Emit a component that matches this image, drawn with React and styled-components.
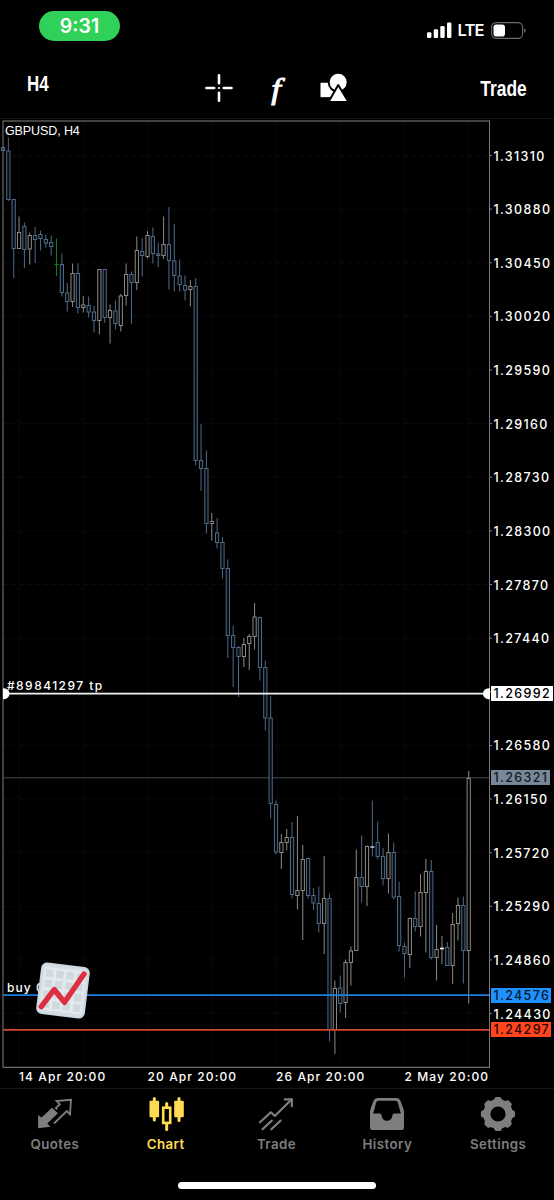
import React from "react";
import styled, { createGlobalStyle } from "styled-components";

const GlobalStyle = createGlobalStyle`
  * {
    box-sizing: border-box;
  }
  body {
    margin: 0;
    background: #000;
    font-family: Inter, "Liberation Sans", sans-serif;
  }
`;

const Screen = styled.div`
  width: 554px;
  height: 1200px;
  display: flex;
  flex-direction: column;
  background: #000;
  color: #fff;
  overflow: hidden;
`;

const StatusBar = styled.div`
  height: 52px;
  padding: 11px 28px 0 39px;
  display: flex;
  justify-content: space-between;
  align-items: flex-start;
`;

const TimePill = styled.div`
  width: 81px;
  height: 30px;
  border-radius: 15px;
  background: #30d158;
  font-size: 19.5px;
  font-weight: 600;
  line-height: 30px;
  text-align: center;
`;

const StatusIcons = styled.div`
  display: flex;
  align-items: center;
  height: 17px;
  margin-top: 11px;
`;

const Network = styled.span`
  font-size: 16.5px;
  font-weight: 600;
  letter-spacing: -0.8px;
  line-height: 17px;
  margin: 0 7.5px 0 5.5px;
  width: 26px;
`;

const Toolbar = styled.div`
  height: 67px;
  padding: 0 27px;
  display: grid;
  grid-template-columns: 1fr auto 1fr;
  border-bottom: 1px solid #161616;
`;

const BarButton = styled.button`
  border: none;
  background: none;
  padding: 0;
  color: #fff;
  font-family: "Liberation Sans", Arial, sans-serif;
  font-size: 22px;
  font-weight: 700;
  line-height: 24px;
  justify-self: ${(p) => (p.$right ? "end" : "start")};
  align-self: start;
  margin-top: ${(p) => (p.$right ? "25px" : "20px")};
  transform: scaleX(${(p) => (p.$right ? 0.79 : 0.77)});
  transform-origin: ${(p) => (p.$right ? "right" : "left")} center;
`;

const Tools = styled.div`
  display: flex;
  align-items: center;
  height: 30px;
  margin-top: 21px;
  padding-right: 1px;
`;

const FunctionSign = styled.span`
  width: 30px;
  margin: 0 29px 0 28px;
  font-family: "Liberation Serif", serif;
  font-style: italic;
  font-size: 30px;
  line-height: 29px;
  text-align: center;
  transform: scaleX(1.15);
  -webkit-text-stroke: 0.9px #fff;
`;

const ChartArea = styled.div`
  height: 969px;
  display: grid;
  grid-template-columns: 490px 1fr;
  grid-template-rows: 949px 20px;
  font-size: 12.5px;
  font-weight: 500;
  letter-spacing: 1.35px;
`;

const Plot = styled.div`
  position: relative;
`;

const PlotSvg = styled.svg`
  display: block;
`;

const PlotLabel = styled.span`
  position: absolute;
  left: 7px;
  top: ${(p) => p.$top}px;
  line-height: 14px;
  font-size: 12px;
  letter-spacing: ${(p) => p.$spacing}px;
  white-space: nowrap;
`;

const Symbol = styled.span`
  position: absolute;
  left: 5px;
  top: 5px;
  font-family: "Liberation Sans", Arial, sans-serif;
  font-size: 12.5px;
  font-weight: 400;
  letter-spacing: -0.1px;
  line-height: 15px;
`;

const Sticker = styled.svg`
  position: absolute;
  left: 34px;
  top: 841px;
`;

const PriceScale = styled.div`
  position: relative;
  padding: 10.5px 0 0 3.5px;
`;

// short marks between the frame and the price labels
const PriceTicks = styled.svg`
  position: absolute;
  left: 0;
  top: 0;
`;

const Price = styled.div`
  height: 53.63px;
  line-height: 53.63px;
`;

const PriceTag = styled.div`
  position: absolute;
  left: 1px;
  top: ${(p) => p.$top}px;
  width: ${(p) => p.$width}px;
  height: 15px;
  line-height: 15px;
  padding-left: 2.5px;
  background: ${(p) => p.$bg};
  color: ${(p) => p.$color};
`;

const TimeScale = styled.div`
  grid-column: 1 / -1;
  padding-left: 19px;
  display: flex;
`;

const TimeLabel = styled.span`
  width: 128.5px;
  line-height: 17px;
  font-size: 12px;
  letter-spacing: 1.1px;
  white-space: nowrap;
`;

const TabBar = styled.nav`
  height: 94px;
  border-top: 1px solid #161616;
  display: flex;
`;

const Tab = styled.div`
  flex: 1;
  display: flex;
  flex-direction: column;
  align-items: center;
  padding: 7px 1px 0 0;
  color: ${(p) => (p.$active ? "#ffdc52" : "#7e7e7f")};
`;

const TabLabel = styled.span`
  margin-top: 4px;
  font-size: 13.3px;
  font-weight: 600;
  line-height: 17px;
  letter-spacing: 0.45px;
`;

const HomeIndicator = styled.div`
  width: 198px;
  height: 7px;
  border-radius: 4px;
  background: #fff;
  margin: 0 auto;
`;

const DOWN = "#4f6a88";
const UP = "#8d8a84";

// [high, low, body top, body bottom, direction]
const candles = [
  [147, 151, 147.5, 150.5, "d"],
  [137.5, 201, 151, 199.5, "d"],
  [199, 278, 199.5, 248.5, "d"],
  [216.5, 248.5, 232.5, 248.5, "u"],
  [222.5, 268, 226.5, 249.5, "d"],
  [232.5, 264.5, 235.5, 249, "u"],
  [227, 263, 235.5, 239.5, "d"],
  [230.5, 250.5, 234.5, 238.5, "d"],
  [234.5, 247.5, 239.5, 243, "d"],
  [235.5, 255.5, 242.5, 246.5, "d"],
  [238.5, 276, 264.5, 264.5, "g"],
  [253.5, 296.5, 264.5, 292.5, "d"],
  [283, 311.5, 293, 301.5, "d"],
  [263.5, 307, 273.5, 301.5, "u"],
  [263.5, 313.5, 273.5, 307.5, "d"],
  [296, 312.5, 305, 307.5, "u"],
  [296.5, 317.5, 305.5, 312, "d"],
  [306, 332.5, 312, 320.5, "d"],
  [269, 334.5, 269.5, 320.5, "u"],
  [269, 323, 269.5, 317.5, "d"],
  [304.5, 343.5, 310.5, 317.5, "u"],
  [300.5, 329.5, 311, 323.5, "d"],
  [294, 331.5, 296, 325.5, "u"],
  [263.5, 305.5, 274.5, 295.5, "u"],
  [271.5, 324, 274.5, 282.5, "d"],
  [236.5, 290, 250.5, 282.5, "u"],
  [238, 276.5, 251.5, 255.5, "d"],
  [231, 258.5, 235.5, 256.5, "u"],
  [227.5, 263.5, 236.5, 253.5, "d"],
  [242.5, 267, 254, 255.5, "d"],
  [216.5, 259, 244.5, 255.5, "u"],
  [207, 289.5, 244.5, 260.5, "d"],
  [224, 291.5, 261, 275.5, "d"],
  [259.5, 291.5, 276, 284.5, "d"],
  [275.5, 300.5, 285.5, 290, "d"],
  [280, 306.5, 286.5, 289.5, "u"],
  [278, 465.5, 286.5, 460.5, "d"],
  [424, 491, 460.5, 468.5, "d"],
  [450.5, 533.5, 468.5, 523.5, "d"],
  [513, 540.5, 521.5, 523.5, "u"],
  [518, 548.5, 533, 542.5, "d"],
  [537, 578.5, 542.5, 568.5, "d"],
  [559.5, 658, 568.5, 635.5, "d"],
  [625.5, 687, 635.5, 647.5, "d"],
  [646, 697, 647.5, 656.5, "d"],
  [638, 667, 644.5, 656.5, "u"],
  [634, 670, 636.5, 643.5, "u"],
  [603, 649.5, 617, 636.5, "u"],
  [616.5, 680.5, 617.5, 667.5, "d"],
  [660.5, 730.5, 667.5, 718, "d"],
  [696, 818.5, 718, 803.5, "d"],
  [800.5, 854.5, 804.5, 852, "d"],
  [834, 869, 842.5, 852.5, "u"],
  [829, 850.5, 837.5, 842.5, "u"],
  [822, 898.5, 837.5, 894.5, "d"],
  [816, 909.5, 890.5, 895.5, "u"],
  [845, 940, 859.5, 890.5, "u"],
  [857.5, 898.5, 858.5, 895.5, "d"],
  [888, 910, 895.5, 903, "d"],
  [886.5, 932.5, 903.5, 923.5, "d"],
  [856, 954, 898.5, 923.5, "u"],
  [893.5, 1041.5, 898.5, 1029.5, "d"],
  [980.5, 1054, 988.5, 1029.5, "u"],
  [975.5, 1012.5, 988, 1003.5, "d"],
  [959.5, 1018, 962.5, 1002.5, "u"],
  [946.5, 985.5, 951, 962.5, "u"],
  [849.5, 951, 877.5, 950.5, "u"],
  [835.5, 902.5, 877.5, 886.5, "d"],
  [845.5, 906, 846.5, 886.5, "u"],
  [800.5, 856.5, 847, 847, "dd"],
  [821.5, 859.5, 842.5, 856.5, "d"],
  [848, 885.5, 856.5, 878.5, "d"],
  [833.5, 893.5, 852.5, 878.5, "u"],
  [842.5, 899.5, 852.5, 897, "d"],
  [881.5, 951.5, 896.5, 945.5, "d"],
  [942.5, 977.5, 946.5, 953.5, "d"],
  [917.5, 968, 918.5, 954.5, "u"],
  [891.5, 931.5, 918.5, 926.5, "d"],
  [874, 936.5, 892.5, 926.5, "u"],
  [859, 952.5, 871.5, 892.5, "u"],
  [860, 959.5, 871.5, 957.5, "d"],
  [925, 980.5, 949.5, 957.5, "u"],
  [936, 964, 948.5, 948.5, "du"],
  [942, 965.5, 947.5, 965.5, "d"],
  [913, 984, 924.5, 965.5, "u"],
  [897.5, 940.5, 905.5, 923.5, "u"],
  [896.5, 983.5, 905.5, 950.5, "d"],
  [771, 1003.5, 778.5, 950.5, "u"],
];

const prices = [
  "1.31310",
  "1.30880",
  "1.30450",
  "1.30020",
  "1.29590",
  "1.29160",
  "1.28730",
  "1.28300",
  "1.27870",
  "1.27440",
  "",
  "1.26580",
  "1.26150",
  "1.25720",
  "1.25290",
  "1.24860",
  "1.24430",
];

const times = ["14 Apr 20:00", "20 Apr 20:00", "26 Apr 20:00", "2 May 20:00"];

const candleX = (i) => 3 + i * 5.353;
const gridY = (i) => 155.5 + i * 53.63;
const gridX = (i) => 19 + i * 64.24;

const Candle = ({ x, data }) => {
  const [high, low, top, bottom, kind] = data;
  if (kind === "g") {
    return (
      <path
        d={`M${x} ${high}V${low}M${x - 2} ${top}H${x + 2}`}
        stroke="#0c8a12"
      />
    );
  }
  if (kind.length === 2) {
    return (
      <>
        <path d={`M${x} ${high}V${low}`} stroke={kind === "dd" ? DOWN : UP} />
        <path
          d={`M${x - 2} ${top}H${x + 2}`}
          stroke={kind === "dd" ? "#b4cbe8" : "#fff"}
          strokeWidth="1.6"
        />
      </>
    );
  }
  const color = kind === "d" ? DOWN : UP;
  return (
    <g stroke={color}>
      <path d={`M${x} ${high}V${top}M${x} ${bottom}V${low}`} />
      <rect
        x={x - 1.6}
        y={top}
        width="3.2"
        height={bottom - top}
        fill={kind === "d" ? "#060b12" : "#000"}
      />
    </g>
  );
};

const PriceChart = () => (
  <PlotSvg width="490" height="949" viewBox="0 119 490 949" fill="none">
    <g stroke="#0b0c0d" strokeDasharray="5 3">
      {prices.map((p, i) => (
        <path key={i} d={`M3 ${gridY(i)}H489`} />
      ))}
      {[0, 1, 2, 3, 4, 5, 6, 7].map((i) => (
        <path key={i} d={`M${gridX(i)} 122V1067`} />
      ))}
    </g>
    <path d="M3 777.8H490" stroke="#454a50" />
    {candles.map((c, i) => (
      <Candle key={i} x={candleX(i)} data={c} />
    ))}
    <path d="M3 693.7H490" stroke="#f1f3f3" strokeWidth="1.8" />
    <path d="M3 995.1H490" stroke="#1a7fdf" strokeWidth="1.8" />
    <path d="M3 1029.8H490" stroke="#d8452f" strokeWidth="1.8" />
    <path d="M3 121V1067.5" stroke="#6a6a6a" strokeWidth="1.2" />
    <path d="M3 121H490M489.6 121V1067.5M3 1067.3H490" stroke="#858585" />
    <path d="M3 688.2h1a5.5 5.5 0 0 1 0 11H3z" fill="#fff" />
    <path d="M490 688.2h-1.5a5.5 5.5 0 0 0 0 11h1.5z" fill="#fff" />
  </PlotSvg>
);

const ChartSticker = () => (
  <Sticker width="58" height="60" viewBox="0 0 58 60">
    <g transform="rotate(7 29 30.4)">
      <rect x="4.5" y="4.5" width="49" height="52" rx="6" fill="#ccd6dd" />
      <rect x="6" y="6" width="46" height="49" rx="5" fill="#d4dee4" />
      <rect x="8" y="9" width="42" height="43" rx="1" fill="#e3eaee" />
      {[0, 1, 2, 3].map((r) =>
        [0, 1, 2, 3].map((c) => (
          <rect
            key={`${r}${c}`}
            x={9.8 + c * 10.4}
            y={11.3 + r * 10.4}
            width="7.4"
            height="7.4"
            fill="#cfd9de"
          />
        ))
      )}
    </g>
    <path
      d="M7.3 46.7L20.2 29.5L30.5 42.3L50 14"
      fill="none"
      stroke="#dd2e44"
      strokeWidth="5.4"
      strokeLinecap="round"
      strokeLinejoin="round"
    />
  </Sticker>
);

const SignalIcon = () => (
  <svg width="25" height="17" viewBox="0 0 25 17" fill="#fff">
    <rect x="0" y="10.3" width="4.4" height="5.7" rx="1.3" />
    <rect x="6.7" y="7.3" width="4.4" height="8.7" rx="1.3" />
    <rect x="13.3" y="4" width="4.4" height="12" rx="1.3" />
    <rect x="20" y="0.5" width="4.4" height="15.5" rx="1.3" />
  </svg>
);

const BatteryIcon = () => (
  <svg width="35" height="17" viewBox="0 0 35 17">
    <rect
      x="0.6"
      y="0.6"
      width="31"
      height="15.8"
      rx="4.6"
      fill="none"
      stroke="#6d6d6d"
      strokeWidth="1.1"
    />
    <rect x="2.5" y="2.4" width="11.5" height="12.2" rx="2.8" fill="#fff" />
    <path d="M33.2 6.2q1.6 .8 1.6 2.3t-1.6 2.3z" fill="#6d6d6d" />
  </svg>
);

const CrosshairIcon = () => (
  <svg width="28" height="30" viewBox="0 0 28 30">
    <path
      d="M1.5 15H9.2M18.8 15H26.5M14 2.3V10.2M14 19.8V27.7"
      stroke="#fff"
      strokeWidth="2.6"
      strokeLinecap="round"
    />
    <circle cx="14" cy="15" r="1.1" fill="#fff" />
  </svg>
);

const ObjectsIcon = () => (
  <svg width="28" height="30" viewBox="0 0 28 30" stroke="#000">
    <rect x="0" y="9.2" width="14" height="15.5" rx="1.5" fill="#fff" />
    <circle cx="18.2" cy="9.3" r="9.5" fill="#fff" strokeWidth="2" />
    <path
      d="M18.2 12L28.5 29H8.5Z"
      fill="#fff"
      strokeWidth="2"
      strokeLinejoin="round"
    />
  </svg>
);

const QuotesIcon = () => (
  <svg width="36" height="36" viewBox="0 0 36 36" fill="none">
    <path
      d="M1.1 19L4.5 21.5L14.9 11.7L20.9 17.3L10.3 27.5L13.5 30.7L1.1 32.3Z"
      fill="currentColor"
    />
    <path
      d="M20 13.5L18.8 12L22.9 8.2L19.5 5L34 3.8L33 18.3L29.8 15L17 27.5"
      stroke="currentColor"
      strokeWidth="1.8"
    />
  </svg>
);

const ChartIcon = () => (
  <svg width="36" height="36" viewBox="0 0 36 36">
    <g fill="currentColor">
      <rect x="1.5" y="4.8" width="9.6" height="16.5" rx="1" />
      <rect x="4.8" y="1" width="3" height="24.5" rx="1.5" />
      <rect x="26.2" y="4.8" width="9.6" height="16.5" rx="1" />
      <rect x="29.5" y="1" width="3" height="25" rx="1.5" />
      <rect x="17.2" y="6" width="3" height="6" rx="1.5" />
      <rect x="17.2" y="26" width="3" height="9" rx="1.5" />
    </g>
    <rect
      x="15.2"
      y="11.7"
      width="7"
      height="15.2"
      fill="none"
      stroke="currentColor"
      strokeWidth="2.6"
    />
  </svg>
);

const TradeIcon = () => (
  <svg
    width="36"
    height="36"
    viewBox="0 0 36 36"
    fill="none"
    stroke="currentColor"
    strokeWidth="2.2"
    strokeLinecap="round"
    strokeLinejoin="round"
  >
    <path d="M2 26.3L12.9 16.3L16.8 20L33.5 3.5" />
    <path d="M26.8 3.4H33.8V10.2" />
    <path d="M4.5 33.3L13.8 24.6M13.3 33.3L22.5 24.6" />
  </svg>
);

const HistoryIcon = () => (
  <svg width="36" height="36" viewBox="0 0 36 36">
    <path
      fillRule="evenodd"
      fill="currentColor"
      d="M8.5 2H27.5Q30.3 2 31.3 4.6L34.3 12.5Q35 14.5 35 16.5V31.5Q35 34 32.5 34H3.5Q1 34 1 31.5V16.5Q1 14.5 1.7 12.5L4.7 4.6Q5.7 2 8.5 2ZM9.2 4.7Q7.7 4.7 7.2 6.2L4.2 17.5H11Q12.3 17.5 12.5 19Q13.2 24.8 18 24.8T23.5 19Q23.7 17.5 25 17.5H31.8L28.8 6.2Q28.3 4.7 26.8 4.7Z"
    />
  </svg>
);

const SettingsIcon = () => (
  <svg width="36" height="36" viewBox="0 0 36 36">
    <circle
      cx="18"
      cy="18"
      r="11.2"
      fill="none"
      stroke="currentColor"
      strokeWidth="7.2"
    />
    {[0, 45, 90, 135, 180, 225, 270, 315].map((a) => (
      <path
        key={a}
        d="M12 5.2Q13.8 4.8 14.4 2.6Q15 .9 16.6 .9H19.4Q21 .9 21.6 2.6Q22.2 4.8 24 5.2Z"
        fill="currentColor"
        transform={`rotate(${a} 18 18)`}
      />
    ))}
  </svg>
);

const tabs = [
  { label: "Quotes", icon: <QuotesIcon /> },
  { label: "Chart", icon: <ChartIcon />, active: true },
  { label: "Trade", icon: <TradeIcon /> },
  { label: "History", icon: <HistoryIcon /> },
  { label: "Settings", icon: <SettingsIcon /> },
];

const App = () => {
  return (
    <Screen>
      <GlobalStyle />
      <StatusBar>
        <TimePill>9:31</TimePill>
        <StatusIcons>
          <SignalIcon />
          <Network>LTE</Network>
          <BatteryIcon />
        </StatusIcons>
      </StatusBar>
      <Toolbar>
        <BarButton>H4</BarButton>
        <Tools>
          <CrosshairIcon />
          <FunctionSign>f</FunctionSign>
          <ObjectsIcon />
        </Tools>
        <BarButton $right>Trade</BarButton>
      </Toolbar>
      <ChartArea>
        <Plot>
          <PriceChart />
          <Symbol>GBPUSD, H4</Symbol>
          <PlotLabel $top={560} $spacing={1.45}>
            #89841297 tp
          </PlotLabel>
          <PlotLabel $top={862} $spacing={1.05}>
            buy 0
          </PlotLabel>
          <ChartSticker />
        </Plot>
        <PriceScale>
          <PriceTicks width="3" height="949" viewBox="0 119 3 949">
            {prices.map((p, i) => (
              <path key={i} d={`M0 ${gridY(i)}H2`} stroke="#858585" />
            ))}
          </PriceTicks>
          {prices.map((price, i) => (
            <Price key={i}>{price}</Price>
          ))}
          <PriceTag $top={567} $width={62} $bg="#fff" $color="#000">
            1.26992
          </PriceTag>
          <PriceTag $top={651} $width={59} $bg="#778899" $color="#101820">
            1.26321
          </PriceTag>
          <PriceTag $top={869} $width={60} $bg="#1e90ff" $color="#04182c">
            1.24576
          </PriceTag>
          <PriceTag $top={903} $width={60} $bg="#ff4520" $color="#2c0700">
            1.24297
          </PriceTag>
        </PriceScale>
        <TimeScale>
          {times.map((time) => (
            <TimeLabel key={time}>{time}</TimeLabel>
          ))}
        </TimeScale>
      </ChartArea>
      <TabBar>
        {tabs.map((tab) => (
          <Tab key={tab.label} $active={tab.active}>
            {tab.icon}
            <TabLabel>{tab.label}</TabLabel>
          </Tab>
        ))}
      </TabBar>
      <HomeIndicator />
    </Screen>
  );
};

export default App;
